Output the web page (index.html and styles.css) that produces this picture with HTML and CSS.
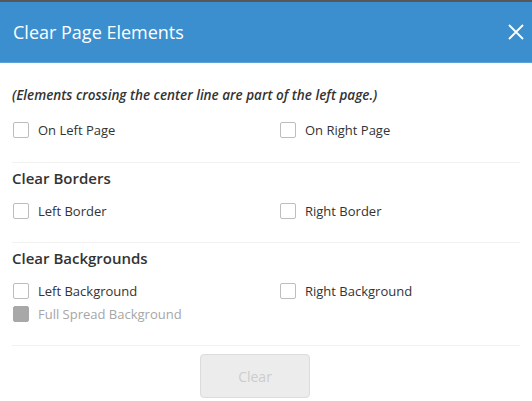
FILE: index.html
```html
<!DOCTYPE html>
<html>
<head>
    <title>Clear Page Elements</title>
    <link rel="stylesheet" href="styles.css">
</head>
<body>
    <div class="modal">
        <div class="modal-header">
            <h1>Clear Page Elements</h1>
            <button class="close-btn" aria-label="Close">
                <svg width="16" height="16" viewBox="0 0 16 16">
                    <path d="M1 1 L15 15 M15 1 L1 15" stroke="#fff" stroke-width="1.8" fill="none"/>
                </svg>
            </button>
        </div>

        <div class="modal-body">
            <p class="note">(Elements crossing the center line are part of the left page.)</p>
            <div class="options">
                <label class="option"><span class="box"></span>On Left Page</label>
                <label class="option"><span class="box"></span>On Right Page</label>
            </div>

            <div class="section">
                <h2>Clear Borders</h2>
                <div class="options">
                    <label class="option"><span class="box"></span>Left Border</label>
                    <label class="option"><span class="box"></span>Right Border</label>
                </div>
            </div>

            <div class="section">
                <h2>Clear Backgrounds</h2>
                <div class="options">
                    <label class="option"><span class="box"></span>Left Background</label>
                    <label class="option"><span class="box"></span>Right Background</label>
                    <label class="option disabled"><span class="box"></span>Full Spread Background</label>
                </div>
            </div>

            <div class="modal-footer">
                <button class="btn" disabled>Clear</button>
            </div>
        </div>
    </div>
</body>
</html>
```

FILE: styles.css
```css
* {
    margin: 0;
    padding: 0;
    box-sizing: border-box;
}

body {
    font-family: "Open Sans", Arial, sans-serif;
    background-color: #fff;
    color: #333;
}

/* Header */
.modal-header {
    display: flex;
    align-items: center;
    justify-content: space-between;
    height: 63px;
    padding: 0 8px 0 13px;
    border-top: 2px solid #585858;
    border-bottom: 1px solid #5aa2d8;
    background-color: #3b8fce;
    color: #fff;
}

.modal-header h1 {
    font-size: 18px;
    font-weight: 400;
    padding-bottom: 1px;
}

.close-btn {
    display: flex;
    width: 16px;
    height: 16px;
    border: none;
    background: none;
    cursor: pointer;
}

/* Body */
.modal-body {
    padding: 0 12px;
}

.note {
    margin-top: 22px;
    font-size: 13.5px;
    line-height: 20px;
    font-style: italic;
    font-weight: 600;
    color: #333;
}

.options {
    display: grid;
    grid-template-columns: 1fr 1fr;
    column-gap: 26px;
    row-gap: 3px;
    margin-top: 15px;
    padding-bottom: 22px;
    border-bottom: 1px solid #f2f2f2;
}

.option {
    display: flex;
    align-items: center;
    gap: 9px;
    padding-left: 1px;
    font-size: 13px;
    line-height: 20px;
    color: #333;
}

.box {
    width: 16px;
    height: 16px;
    border: 1px solid #bdbdbd;
    border-radius: 2px;
    background-color: #fff;
}

.option.disabled {
    color: #a6a6a6;
}

.option.disabled .box {
    border-color: #a8a8a8;
    background-color: #a8a8a8;
}

.section {
    padding-top: 4px;
}

.section h2 {
    font-size: 15px;
    font-weight: 600;
    line-height: 22px;
    color: #333;
}

.section .options {
    margin-top: 12px;
    padding-bottom: 21px;
}

/* Footer */
.modal-footer {
    padding: 8px 0 0 188px;
}

.btn {
    width: 110px;
    height: 44px;
    font-family: inherit;
    font-size: 14px;
    color: #cdcdcd;
    background-color: #ececec;
    border: 1px solid #dcdcdc;
    border-radius: 4px;
}
```
